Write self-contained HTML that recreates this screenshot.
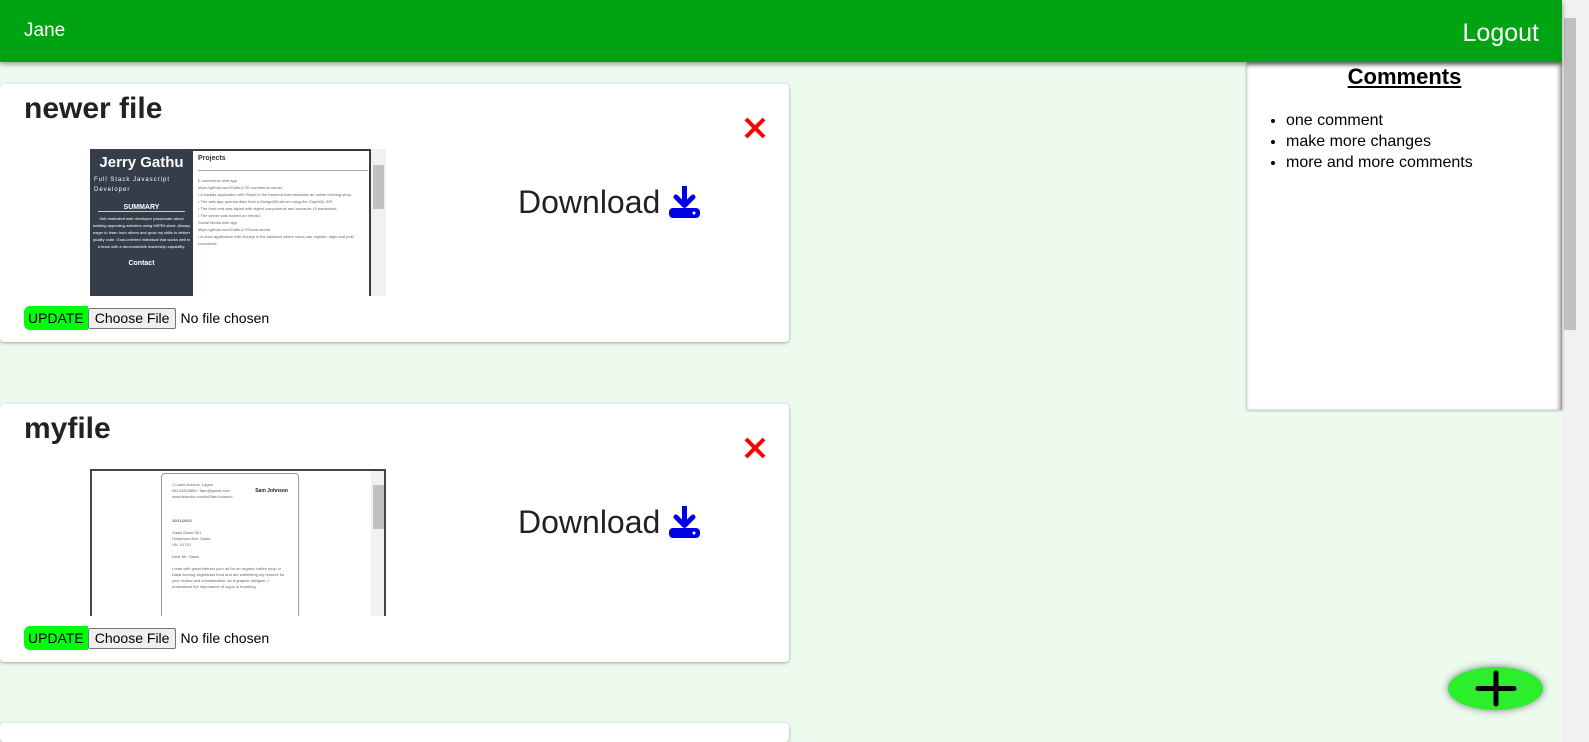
<!DOCTYPE html>
<html style="overflow:hidden;height:742px"><head><meta charset="utf-8"><style>
*{box-sizing:border-box}
body{margin:0;width:1589px;height:742px;overflow:hidden;background:#edfbef;font-family:"Liberation Sans",sans-serif;position:relative}
.hdr{position:absolute;left:0;top:0;width:1562px;height:62px;background:#00a412;color:#fff;box-shadow:0 2px 5px rgba(0,0,0,.4);z-index:5}
.hdr .l{position:absolute;left:24px;top:20px;font-size:19px}
.hdr .r{position:absolute;right:23px;top:19px;font-size:25px}
.sb{position:absolute;left:1562px;top:0;width:27px;height:742px;background:#f1f1f1}
.sb i{position:absolute;left:2px;top:18px;width:12px;height:312px;background:#c1c1c1}
.card{position:absolute;left:0;width:789px;height:258px;background:#fff;border-radius:4px;box-shadow:0 1px 3px rgba(0,0,0,.35)}
.card h2{position:absolute;left:24px;top:8px;margin:0;font-size:30px;color:#222}
.x{position:absolute;left:743px;top:32px}
.dl{position:absolute;left:518px;top:100px;font-size:32px;color:#222;display:flex;align-items:center}
.dl svg{margin-left:8px}
.pv{position:absolute;left:90px;top:65px;width:296px;height:147px;background:#fff;overflow:hidden}
.pv .scr{position:absolute;right:0;top:0;width:15px;height:147px;background:#f1f1f1}
.pv .scr i{position:absolute;left:2px;top:16px;width:11px;height:44px;background:#c1c1c1}
.upd{position:absolute;left:24px;top:222px;display:flex;align-items:center;font-size:14px}
.upd .u{background:#00ff0a;height:24px;line-height:24px;padding:0 4px;border-radius:6px 0 0 6px}
.upd .c{background:#efefef;border:1px solid #767676;border-radius:2px;height:21px;line-height:19px;padding:0 6px}
.upd .n{margin-left:4px}
.cm{position:absolute;left:1247px;top:62px;width:315px;height:348px;background:#fff;box-shadow:-2px 2px 5px rgba(0,0,0,.5) inset, 0 0 3px rgba(0,0,0,.4)}
.cm h3{margin:0;text-align:center;font-size:22px;text-decoration:underline;padding-top:2px}
.cm ul{margin:20px 0 0;padding-left:39px;font-size:16px;line-height:21px}
.fab{position:absolute;left:1448px;top:667px;width:95px;height:43px;border-radius:50%;background:#2bef2b;box-shadow:0 0 8px rgba(0,0,0,.5)}
</style></head><body>
<div class="hdr"><span class="l">Jane</span><span class="r">Logout</span></div>
<div class="sb"><i></i></div>

<div class="card" style="top:84px">
<h2>newer file</h2>
<svg class="x" width="24" height="24" viewBox="0 0 24 24"><path d="M3 3L21 21M21 3L3 21" stroke="#f00" stroke-width="4"/></svg>
<div class="pv">
 <div style="position:absolute;left:0;top:0;width:103px;height:147px;background:#353c4a;color:#fff;text-align:center">
  <div style="font-size:15px;font-weight:bold;margin-top:5px">Jerry Gathu</div>
  <div style="font-size:6px;letter-spacing:1px;text-align:left;padding-left:4px;margin-top:4px;line-height:10px">Full Stack Javascript<br>Developer</div>
  <div style="font-size:7px;font-weight:bold;margin-top:9px;border-bottom:1px solid #ccc;margin-left:8px;margin-right:8px">SUMMARY</div>
  <div style="font-size:4px;line-height:7px;margin-top:3px;padding:0 2px">Self-motivated web developer passionate about building appealing websites using MERN stack. Always eager to learn from others and grow my skills to deliver quality code. Goal-oriented individual that works well in a team with a demonstrable leadership capability.</div>
  <div style="font-size:7px;font-weight:bold;margin-top:10px">Contact</div>
 </div>
 <div style="position:absolute;left:108px;top:6px;width:170px;font-size:7px;color:#333">
  <b>Projects</b><div style="border-top:1px solid #aaa;margin-top:8px"></div>
  <div style="font-size:4px;line-height:7px;color:#666;margin-top:6px">E-commerce web app<br>https://github.com/Gathu17/E-commerce-server<br>• A Nodejs application with React in the frontend that simulates an online clothing shop.<br>• The web app queries data from a MongoDB server using the GraphQL API.<br>• The front end was styled with styled components and semantic UI framework.<br>• The server was hosted on heroku.<br>Social Media web app<br>https://github.com/Gathu17/Social-server<br>• A react application with Nodejs in the backend where users can register, login and post comments.</div>
 </div>
 <div style="position:absolute;left:103px;top:0;width:178px;height:147px;border:2px solid #353c4a;border-left:none;border-bottom:none"></div>
 <div class="scr"><i></i></div>
</div>
<div class="dl">Download <svg width="33" height="33" viewBox="0 0 33 33"><path d="M16.5 1V19M8 11L16.5 19.5L25 11" stroke="#0000e6" stroke-width="5" fill="none" stroke-linecap="round" stroke-linejoin="round"/><rect x="1" y="22" width="31" height="10" rx="4" fill="#0000e6"/><circle cx="26" cy="27" r="1.5" fill="#fff"/></svg></div>
<div class="upd"><span class="u">UPDATE</span><span class="c">Choose File</span><span class="n">No file chosen</span></div>
</div>

<div class="card" style="top:404px">
<h2>myfile</h2>
<svg class="x" width="24" height="24" viewBox="0 0 24 24"><path d="M3 3L21 21M21 3L3 21" stroke="#f00" stroke-width="4"/></svg>
<div class="pv" style="border:2px solid #444;border-bottom:none">
 <div style="position:absolute;left:69px;top:2px;width:138px;height:150px;border:1px solid #999;border-radius:4px;font-size:4px;line-height:6px;color:#666;padding:8px 10px">
  1 Lamo Avenue, Lagos<br>08133334856 / 5am@gmail.com<br>www.linkedin.com/in/SamJohnson<span style="float:right;font-size:5px;font-weight:bold;color:#222;margin-top:-6px">Sam Johnson</span><br><br><br><br><b>10/11/2022</b><br><br>Oasis David 321<br>Hollywood Ave, Dalat,<br>VN, 91710<br><br>Dear Mr. Oasis,<br><br>I read with great interest your ad for an organic coffee shop in Dalat serving vegetarian food and am submitting my resume for your review and consideration. As a graphic designer, I understand the importance of logos in branding.
 </div>
 <div class="scr" style="right:-2px;top:-2px"><i></i></div>
</div>
<div class="dl">Download <svg width="33" height="33" viewBox="0 0 33 33"><path d="M16.5 1V19M8 11L16.5 19.5L25 11" stroke="#0000e6" stroke-width="5" fill="none" stroke-linecap="round" stroke-linejoin="round"/><rect x="1" y="22" width="31" height="10" rx="4" fill="#0000e6"/><circle cx="26" cy="27" r="1.5" fill="#fff"/></svg></div>
<div class="upd"><span class="u">UPDATE</span><span class="c">Choose File</span><span class="n">No file chosen</span></div>
</div>

<div class="card" style="top:723px;height:19px"></div>

<div class="cm"><h3>Comments</h3>
<ul><li>one comment</li><li>make more changes</li><li>more and more comments</li></ul></div>

<div class="fab"><svg width="95" height="43" viewBox="0 0 95 43"><path d="M48 6V37M30 21.5H66" stroke="#000" stroke-width="5" stroke-linecap="round"/></svg></div>
</body></html>
